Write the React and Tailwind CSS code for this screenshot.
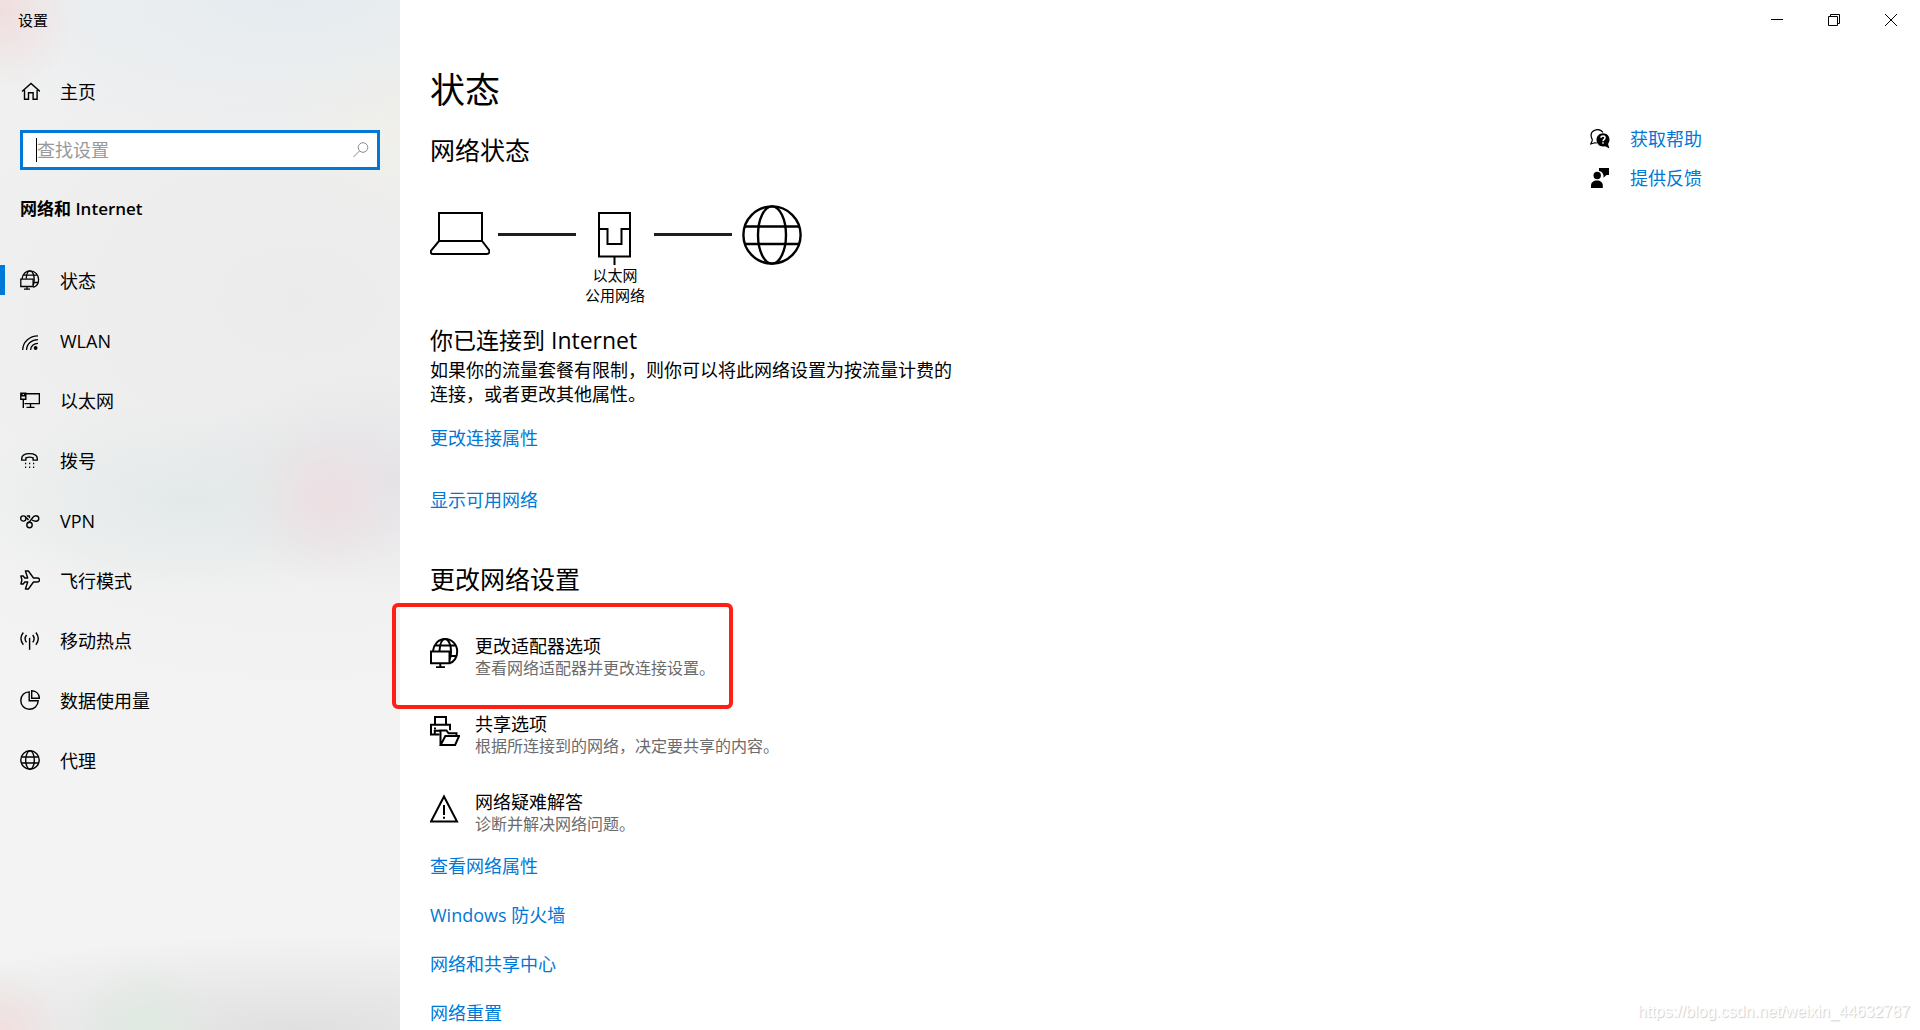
import React from "react";

const Icon = ({ size = 20, width = 1.4, children }) => (
  <svg width={size} height={size} viewBox={`0 0 ${size} ${size}`} fill="none" stroke="currentColor" strokeWidth={width} className="shrink-0" aria-hidden="true">
    {children}
  </svg>
);

const HomeIcon = () => (
  <Icon>
    <path d="m2 9.500 9-8 9 8M4.500 8v9.300h4v-6.500h4.600v6.500h4V8" />
  </Icon>
);

const StatusIcon = () => (
  <Icon width={1.3}>
    <path d="M2 9C2.600 4 6 .8 10 .8c5 0 8.600 4 8.600 8.700 0 4-2.300 7-5.300 7.900M3.300 5.200h14M13.600 12.500h4.600" />
    <path d="M6.200 8.800C6.500 4 8 .8 10 .8c2.500 0 4.200 4 4.200 8.500 0 2.500-.4 4.500-1 6" />
    <path d="M.8 9.200h12.300v7.300H.8zM7 16.500v2.700M4 19.200h6" />
  </Icon>
);

const WlanIcon = () => (
  <Icon width={1.3}>
    <path d="M2.700 20C2.700 12 9.500 5.800 18 5.800M6.600 20c0-6 5-10.400 11.400-10.400M10.600 20c0-3.800 3.200-6.700 7.400-6.700" />
    <circle cx="15.600" cy="18" r="1.900" fill="currentColor" stroke="none" />
  </Icon>
);

const EthernetIcon = () => (
  <Icon width={1.4}>
    <path d="M6 3.700h13.400v9.900H4.500M10.500 13.600v3.800M6.500 17.400h8" />
    <path d="M.8 3.200h5v6H.8zM2 3.500v2.300h2.600V3.500M3.300 9.200v8.800" />
  </Icon>
);

const DialIcon = () => (
  <Icon width={1.4}>
    <path d="M1.700 8.800C1.700 5.500 5 3.600 9.500 3.600s7.800 1.900 7.800 5.200v1.300h-4.200V7.800c-2-.8-5.200-.8-7.200 0v2.300H1.700z" />
    <path d="M5 13.500h1.200M9 13.500h1.200M13 13.500h1.200M5 17.300h1.200M9 17.300h1.200M13 17.300h1.200" />
  </Icon>
);

const VpnIcon = () => (
  <Icon width={1.4}>
    <circle cx="3.300" cy="8.500" r="2.600" />
    <circle cx="9.500" cy="15" r="2.700" />
    <path d="M5.800 7.800c1.200.2 1.800 1.300 2.700 2.200M7.300 13.500c2.600-1.700 3.600-3.300 4.700-5 1.200-1.900 2.300-2.800 3.800-2.800 1.700 0 3 1.200 3 2.800s-1.200 2.700-2.900 2.700c-1.600 0-2.800-.5-3.900-1.200" />
    <path d="M6.800 6h2.600v2.300" />
  </Icon>
);

const AirplaneIcon = () => (
  <Icon width={1.4}>
    <path d="M5.400 1h3l5.100 7h3.700c1.500 0 2.300.9 2.300 2s-.8 2-2.300 2h-3.700l-5.100 7h-3l2.300-7H4.800l-1.600 2H.9l1-4-1-4h2.300l1.600 2h2.900z" strokeLinejoin="round" />
  </Icon>
);

const HotspotIcon = () => (
  <Icon width={1.4}>
    <path d="M3.300 2.500C.1 6.600.1 10.600 3.300 14.700M15.900 2.500c3.200 4.100 3.200 8.100 0 12.200M6.500 5c-1.900 2.500-1.900 4.900 0 7.400M12.700 5c1.900 2.500 1.900 4.900 0 7.400" />
    <path d="M9.600 7.800v12" />
  </Icon>
);

const DataIcon = () => (
  <Icon width={1.4}>
    <path d="M9.200 1.900C4.500 1.900.8 5.500.8 10.500s3.700 8.800 8.500 8.800 8.700-3.400 8.900-8.600h-9z" />
    <path d="M11.700.8c4.500.2 7.500 3.200 7.700 7.400h-7.700z" />
  </Icon>
);

const GlobeIcon = () => (
  <Icon width={1.4}>
    <circle cx="10" cy="10" r="9.200" />
    <ellipse cx="10" cy="10" rx="4.300" ry="9.200" />
    <path d="M1.400 7h17.200M1.400 13h17.200" />
  </Icon>
);

const AdapterIcon = () => (
  <Icon size={30} width={2}>
    <path d="M3 13C4 6 8.500 1 15 1c7 0 12.200 5.500 12.200 12.500 0 6-3.200 10.600-7.500 11.600M5 7.500h20.400M20 18h6.300" />
    <path d="M9.500 13c.4-7 2.500-12 5.500-12 3.700 0 6 6 6 12.500 0 3.500-.5 6-1.300 8" />
    <path d="M1 13.500h18.500v11.700H1zM10.300 25.200v4M6 29.200h9" />
  </Icon>
);

const SharingIcon = () => (
  <Icon size={30} width={2}>
    <path d="M5 8.500V1h11v7.500M9.500 18.500H1V8.700h19v5.500M4 12.500h2" />
    <path d="M4.800 18v-3.200h5.500" />
    <path d="M10.500 29V14.500h6l2 2.800h8V20M10.700 29l4.600-9h13.800l-4 9z" />
  </Icon>
);

const WarningIcon = () => (
  <Icon size={30} width={2}>
    <path d="M14 2.500 27 27.500H1z" />
    <path d="M14 11v10M14 22.800v2" />
  </Icon>
);

const LaptopIcon = () => (
  <Icon size={60} width={2}>
    <path d="M9 36V8h43v28M9 36h43l7 9c1 2 0 4-2 4H3c-2 0-3-2-1.500-4z" />
  </Icon>
);

const PortIcon = () => (
  <Icon size={60} width={2}>
    <path d="M14 8h31v43.500H14zM14 24h8.500v15h14V24H45M29.500 51.500V60" />
  </Icon>
);

const BigGlobeIcon = () => (
  <Icon size={60} width={2.4}>
    <circle cx="30" cy="30" r="28.600" />
    <ellipse cx="30" cy="30" rx="14" ry="28.600" />
    <path d="M3 21.500h54M3 39h54" />
  </Icon>
);

const HelpIcon = () => (
  <Icon width={1.2}>
    <path d="M2.500 11C.3 7 .8 3.500 4 1.600 7.500-.2 11 .8 13 3.300M2.500 11 .8 15l4-1.200 2 .2" />
    <path d="M13 4.200c3.800 0 6.500 2.800 6.500 6.300 0 1.900-.6 3.300-1.500 4.500l1.500 4.500-4.400-2.300c-4.800 1.200-8.600-2-8.600-6.500 0-3.600 2.900-6.500 6.500-6.500z" fill="currentColor" stroke="none" />
    <path d="M11 8.700c.1-2.300 4-2.300 4 0 0 1.700-2 1.600-2 3.500M13 13.300v1.500" stroke="#fff" strokeWidth="1.500" />
  </Icon>
);

const FeedbackIcon = () => (
  <Icon>
    <g fill="currentColor" stroke="none">
      <path d="M9 0h10v7h-2.500l-3 2.800V7.500C13 5 11.500 3.500 9 3z" />
      <circle cx="7.200" cy="7.500" r="3.700" />
      <path d="M1 20v-2.500C1 14.500 3.500 12.500 7 12.500s5.800 2 5.800 5V20z" />
    </g>
  </Icon>
);

const navItems = [
  { label: "状态", icon: StatusIcon, active: true },
  { label: "WLAN", icon: WlanIcon },
  { label: "以太网", icon: EthernetIcon },
  { label: "拨号", icon: DialIcon },
  { label: "VPN", icon: VpnIcon },
  { label: "飞行模式", icon: AirplaneIcon },
  { label: "移动热点", icon: HotspotIcon },
  { label: "数据使用量", icon: DataIcon },
  { label: "代理", icon: GlobeIcon },
];

const settings = [
  { title: "更改适配器选项", text: "查看网络适配器并更改连接设置。", icon: AdapterIcon, marked: true },
  { title: "共享选项", text: "根据所连接到的网络，决定要共享的内容。", icon: SharingIcon },
  { title: "网络疑难解答", text: "诊断并解决网络问题。", icon: WarningIcon },
];

const links = ["查看网络属性", "Windows 防火墙", "网络和共享中心", "网络重置"];

const Sidebar = () => (
  <aside className="w-[400px] shrink-0 bg-[#f3f3f3] bg-[radial-gradient(circle_at_0px_10px,#f0dede,#f0dede00_80px),radial-gradient(ellipse_420px_140px_at_290px_0px,#e5ebef,#e5ebef00),radial-gradient(circle_at_400px_100px,#f1f0e9,#f1f0e900_120px),radial-gradient(circle_at_328px_498px,#ecdfe2_0px,#ecdfe2aa_30px,#ecdfe233_60px,#ecdfe200_90px),radial-gradient(ellipse_220px_100px_at_190px_500px,#e3e9e9,#e3e9e900),radial-gradient(ellipse_240px_110px_at_400px_480px,#e4e3e7,#e4e3e700),radial-gradient(ellipse_600px_420px_at_300px_300px,#ebebeb,#ebebeb00),radial-gradient(circle_at_0px_1030px,#f0dfde,#f0dfde00_65px),radial-gradient(circle_at_145px_1030px,#dfeae1,#dfeae188_30px,#dfeae100_75px),radial-gradient(ellipse_480px_95px_at_300px_1030px,#e0e0e0,#e0e0e000)]">
    <div className="flex h-10 items-center pl-[18px] text-[15px]">设置</div>
    <a href="#home" className="mt-[22px] flex h-[60px] items-center gap-5 px-5">
      <HomeIcon />
      主页
    </a>
    <label className="mx-5 mt-2 flex h-10 items-center border-3 border-[#0078d7] bg-white pr-2 pl-[13px]">
      <span className="h-6 w-px bg-black" />
      <input type="text" aria-label="查找设置" placeholder="查找设置" className="min-w-0 flex-1 outline-none placeholder:text-[#999]" />
      <svg width="16" height="16" viewBox="0 0 16 16" fill="none" stroke="#8a8a8a" aria-hidden="true">
        <circle cx="10" cy="5.500" r="4.800" />
        <path d="M6.500 9 .5 15" />
      </svg>
    </label>
    <h2 className="mt-6 px-5 text-[17px] leading-[30px] font-semibold">网络和 Internet</h2>
    <nav className="mt-[26px]">
      {navItems.map(({ label, icon: NavIcon, active }) => (
        <a key={label} href="#nav" className="flex h-[60px] items-center">
          <span className={active ? "h-[30px] w-[5px] bg-[#0078d7]" : "h-[30px] w-[5px]"} />
          <span className="flex items-center gap-5 pl-[15px]">
            <NavIcon />
            <span className="pt-0.5">{label}</span>
          </span>
        </a>
      ))}
    </nav>
  </aside>
);

const WindowButtons = () => (
  <div className="flex h-10 justify-end pr-px">
    <button type="button" aria-label="最小化" className="flex w-[57px] items-center justify-center">
      <svg width="12" height="12" viewBox="0 0 12 12" stroke="#000" aria-hidden="true"><path d="M0 5.500h12" /></svg>
    </button>
    <button type="button" aria-label="还原" className="flex w-[57px] items-center justify-center">
      <svg width="12" height="12" viewBox="0 0 12 12" fill="none" stroke="#000" aria-hidden="true"><path d="M.5 2.500h9v9h-9zM2.500 2.500v-2h9v9h-2" /></svg>
    </button>
    <button type="button" aria-label="关闭" className="flex w-[57px] items-center justify-center">
      <svg width="12" height="12" viewBox="0 0 12 12" stroke="#000" aria-hidden="true"><path d="m0 0 12 12M12 0 0 12" /></svg>
    </button>
  </div>
);

const ConnectionLine = () => (
  <div className="flex h-[58px] w-[78px] items-center">
    <div className="h-[3px] w-full bg-[#1f1f1f]" />
  </div>
);

const NetworkDiagram = () => (
  <div className="mt-[38px] flex items-start">
    <LaptopIcon />
    <div className="ml-2"><ConnectionLine /></div>
    <div className="flex w-[78px] flex-col items-center text-[15px] leading-5">
      <PortIcon />
      <span>以太网</span>
      <span>公用网络</span>
    </div>
    <ConnectionLine />
    <div className="ml-2.5"><BigGlobeIcon /></div>
  </div>
);

const SettingItem = ({ item }) => {
  const ItemIcon = item.icon;
  return (
    <li className="relative">
      <a href="#setting" className="flex items-start gap-[15px]">
        <span className="mt-1"><ItemIcon /></span>
        <span className="flex flex-col">
          <span>{item.title}</span>
          <span className="text-base leading-5 text-[#6b6b6b]">{item.text}</span>
        </span>
      </a>
      {item.marked && <span className="pointer-events-none absolute -top-[31px] -left-[38px] h-[106px] w-[341px] rounded-md border-4 border-[#fe2015]" />}
    </li>
  );
};

const App = () => {
  return (
    <div className="relative flex min-h-screen bg-white font-['Open_Sans','Noto_Sans_CJK_SC',sans-serif] text-[18px] leading-6 text-black">
      <Sidebar />
      <div className="min-w-0 flex-1">
        <WindowButtons />
        <div className="flex justify-between pl-[30px]">
          <main className="pt-[26px]">
            <h1 className="text-[35px] leading-[48px]">状态</h1>
            <h2 className="mt-[19px] text-[25px] leading-[34px]">网络状态</h2>
            <NetworkDiagram />
            <h3 className="mt-5 text-[23px] leading-[30px]">你已连接到 Internet</h3>
            <p className="mt-[3px] w-[525px]">如果你的流量套餐有限制，则你可以将此网络设置为按流量计费的连接，或者更改其他属性。</p>
            <div className="mt-5 flex flex-col items-start gap-[38px] text-[#0078d7]">
              <a href="#properties">更改连接属性</a>
              <a href="#available">显示可用网络</a>
            </div>
            <h2 className="mt-[50px] text-[25px] leading-[34px]">更改网络设置</h2>
            <ul className="mt-[38px] flex flex-col gap-[34px]">
              {settings.map((item) => (
                <SettingItem key={item.title} item={item} />
              ))}
            </ul>
            <div className="mt-5 flex flex-col items-start gap-[25px] text-[#0078d7]">
              {links.map((link) => (
                <a key={link} href="#link">{link}</a>
              ))}
            </div>
          </main>
          <aside className="flex w-[330px] shrink-0 flex-col items-start gap-[15px] pt-[87px]">
            <a href="#help" className="flex items-center gap-5">
              <HelpIcon />
              <span className="text-[#0078d7]">获取帮助</span>
            </a>
            <a href="#feedback" className="flex items-center gap-5">
              <FeedbackIcon />
              <span className="text-[#0078d7]">提供反馈</span>
            </a>
          </aside>
        </div>
      </div>
      <div className="absolute right-2.5 bottom-1.5 font-['Liberation_Sans',sans-serif] text-base leading-6 text-white [text-shadow:1px_1px_1px_#ccc]">https://blog.csdn.net/weixin_44632787</div>
    </div>
  );
};

export default App;
